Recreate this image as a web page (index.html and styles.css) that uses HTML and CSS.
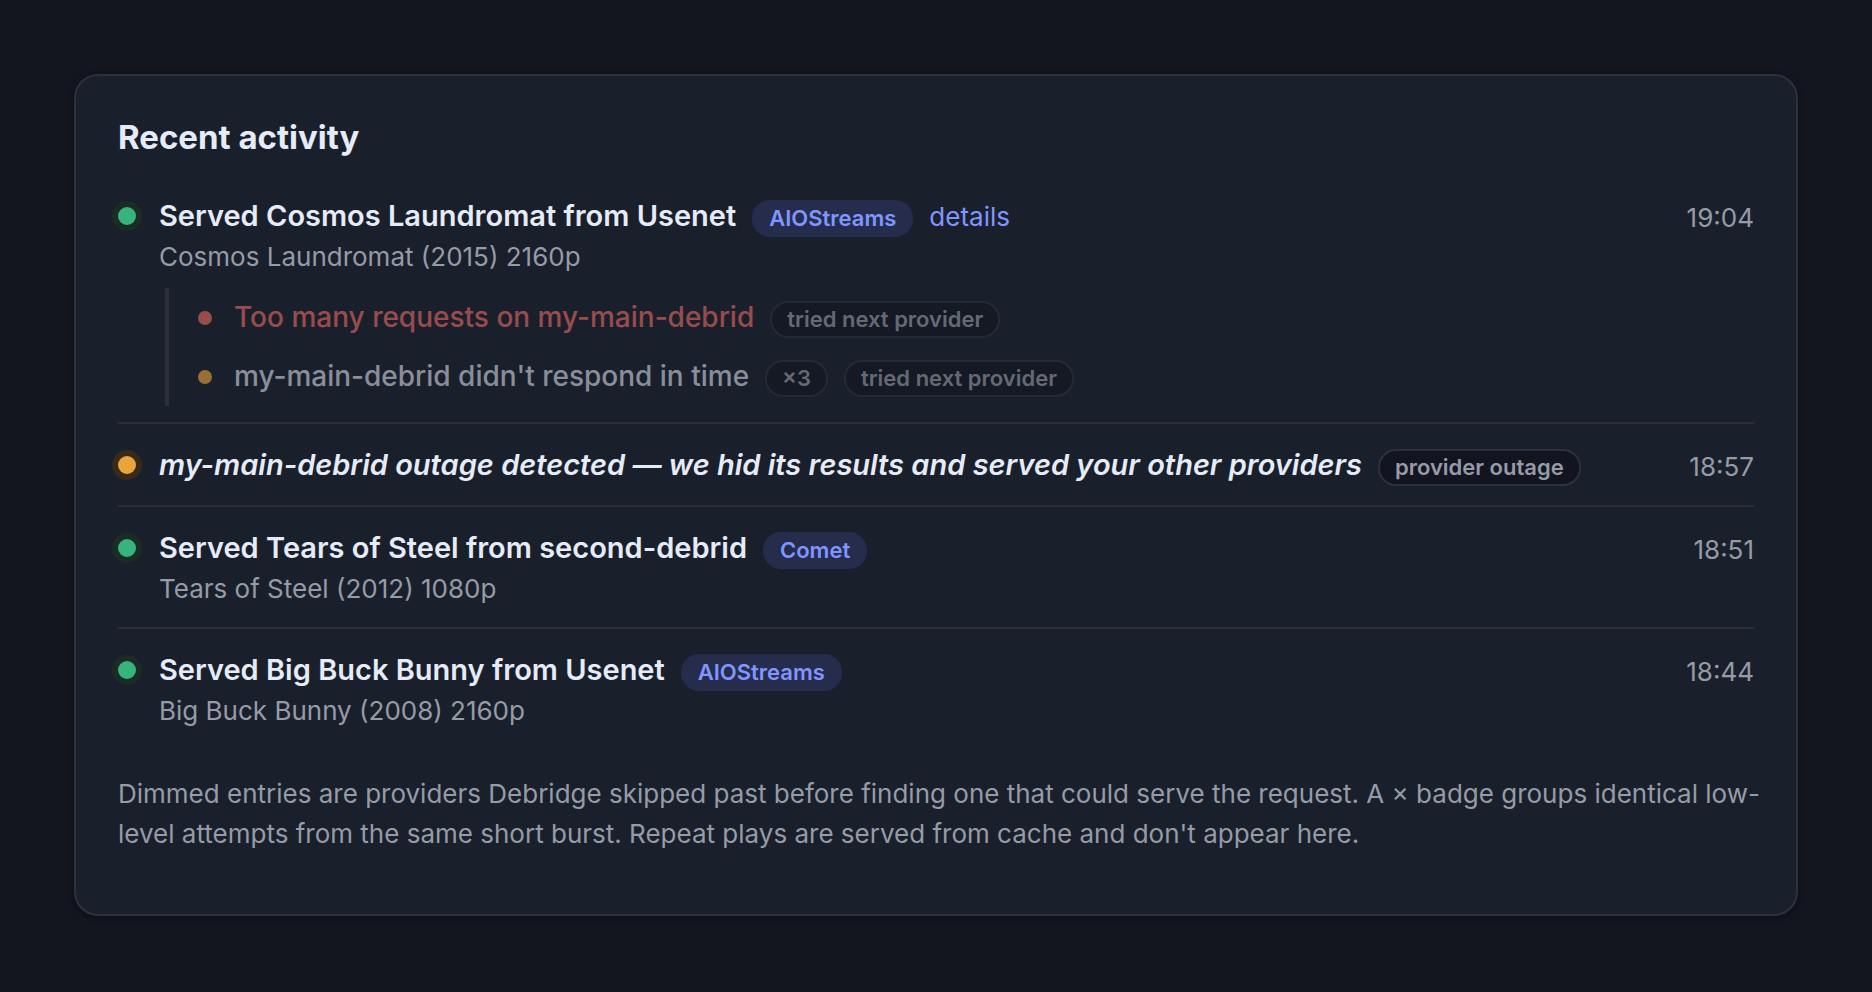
FILE: index.html
```html
<!DOCTYPE html>
<html lang="en">
<head>
  <meta charset="UTF-8">
  <meta name="viewport" content="width=device-width, initial-scale=1">
  <title>Recent activity</title>
  <link rel="stylesheet" href="styles.css">
</head>

<body>

  <section class="card">
    <h2>Recent activity</h2>

    <ul class="activity">
      <li class="entry with-attempts">
        <span class="dot ok"></span>
        <div class="entry-body">
          <div class="entry-title">
            <span>Served Cosmos Laundromat from Usenet</span>
            <span class="badge accent">AIOStreams</span>
            <a class="details" href="#details">details</a>
          </div>
          <div class="entry-sub">Cosmos Laundromat (2015) 2160p</div>

          <!-- Providers skipped before the one that served -->
          <ul class="attempts">
            <li class="attempt error">
              <span class="dot small bad"></span>
              <span class="attempt-title">Too many requests on my-main-debrid</span>
              <span class="badge">tried next provider</span>
            </li>
            <li class="attempt">
              <span class="dot small warn"></span>
              <span class="attempt-title">my-main-debrid didn't respond in time</span>
              <span class="badge">×3</span>
              <span class="badge">tried next provider</span>
            </li>
          </ul>
        </div>
        <time class="entry-time">19:04</time>
      </li>

      <li class="entry">
        <span class="dot warn"></span>
        <div class="entry-body">
          <div class="entry-title">
            <em>my-main-debrid outage detected — we hid its results and served your other providers</em>
            <span class="badge">provider outage</span>
          </div>
        </div>
        <time class="entry-time">18:57</time>
      </li>

      <li class="entry">
        <span class="dot ok"></span>
        <div class="entry-body">
          <div class="entry-title">
            <span>Served Tears of Steel from second-debrid</span>
            <span class="badge accent">Comet</span>
          </div>
          <div class="entry-sub">Tears of Steel (2012) 1080p</div>
        </div>
        <time class="entry-time">18:51</time>
      </li>

      <li class="entry">
        <span class="dot ok"></span>
        <div class="entry-body">
          <div class="entry-title">
            <span>Served Big Buck Bunny from Usenet</span>
            <span class="badge accent">AIOStreams</span>
          </div>
          <div class="entry-sub">Big Buck Bunny (2008) 2160p</div>
        </div>
        <time class="entry-time">18:44</time>
      </li>
    </ul>

    <p class="note">Dimmed entries are providers Debridge skipped past before finding one that could serve the request. A × badge groups identical low-level attempts from the same short burst. Repeat plays are served from cache and don't appear here.</p>
  </section>

</body>
</html>
```
FILE: styles.css
```css
* {
  box-sizing: border-box;
}

body {
  margin: 0;
  padding: 74px;
  background-color: #13161f;
  color: #e6ebf8;
  font-family: Inter, "Liberation Sans", sans-serif;
  font-size: 26px;
}

.card {
  padding: 42px 42px 60px;
  background-color: #1a202b;
  border: 2px solid #2c313d;
  border-radius: 24px;
  box-shadow: 0 2px 6px rgba(0, 0, 0, 0.35);
}

h2 {
  margin: 0 0 19px;
  font-size: 33px;
  font-weight: 700;
  line-height: 38px;
}

ul {
  list-style: none;
  margin: 0;
  padding: 0;
}

.entry {
  display: flex;
  align-items: flex-start;
  gap: 23px;
  padding: 18px 0;
}

.entry.with-attempts {
  padding-bottom: 16px;
}

.entry + .entry {
  border-top: 2px solid #2a2f3b;
}

.entry-body {
  flex: 1;
  min-width: 0;
}

.entry-title {
  display: flex;
  align-items: baseline;
  gap: 16px;
  height: 45px;
  font-size: 29px;
  font-weight: 600;
  line-height: 45px;
}

.entry-sub {
  padding-bottom: 2px;
  color: #969ba7;
  line-height: 37px;
}

.entry-time {
  height: 45px;
  color: #969ba7;
  line-height: 49px;
}

.details {
  color: #8096ff;
  font-size: 26px;
  font-weight: 400;
  text-decoration: none;
}

.details:hover {
  text-decoration: underline;
}

/* Status dots */
.dot {
  flex: none;
  width: 18px;
  height: 18px;
  margin-top: 14px;
  border-radius: 50%;
}

.dot.small {
  width: 14px;
  height: 14px;
  margin: 0 6px 0 0;
  align-self: center;
}

.ok {
  background-color: #37b37e;
  box-shadow: 0 0 0 6px #1a2c23;
}

.warn {
  background-color: #eaa53a;
  box-shadow: 0 0 0 6px #382a18;
}

.bad {
  background-color: #eb6a66;
}

.dot.small {
  box-shadow: none;
}

/* Badges */
.badge {
  padding: 0 15px;
  background-color: #12151f;
  border: 2px solid #2c313d;
  border-radius: 18px;
  color: #969ba7;
  font-size: 22px;
  font-weight: 600;
  line-height: 33px;
}

.badge.accent {
  background-color: #252c4c;
  border-color: #252c4c;
  color: #8096ff;
}

/* Skipped attempts */
.attempts {
  margin: 11px 0 0 6px;
  padding-left: 29px;
  border-left: 4px solid #2a2f3b;
}

.attempt {
  display: flex;
  align-items: baseline;
  gap: 16px;
  height: 59px;
  line-height: 59px;
  opacity: 0.6;
}

.attempt-title {
  color: #d3d8e4;
  font-size: 28px;
  font-weight: 500;
}

.attempt.error .attempt-title {
  color: #eb6a66;
}

/* Lets the first line run slightly into the card padding */
.note {
  margin: 25px -8px 0 0;
  color: #969ba7;
  line-height: 40px;
}
```
